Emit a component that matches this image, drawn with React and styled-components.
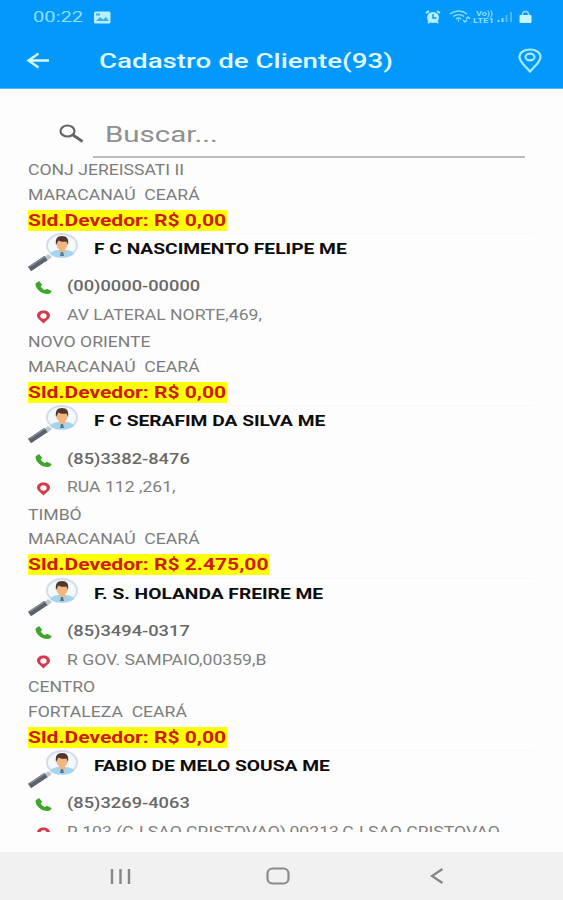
import React from 'react';
import styled, { createGlobalStyle } from 'styled-components';

const GlobalStyle = createGlobalStyle`
  * {
    box-sizing: border-box;
  }
  body {
    margin: 0;
    background: #fdfdfd;
    font-family: Roboto, "Liberation Sans", sans-serif;
  }
`;

const Screen = styled.div`
  display: flex;
  flex-direction: column;
  width: 563px;
  height: 900px;
  overflow: hidden;
  background: #fdfdfd;
`;

const Header = styled.header`
  height: 89px;
  flex: none;
  background: #0398fb;
  border-bottom: 1px solid #55b9f5;
`;

const StatusBar = styled.div`
  display: flex;
  align-items: center;
  height: 34px;
  padding: 0 31px 0 33px;
`;

const StatusIcons = styled.div`
  display: flex;
  align-items: center;
  margin-left: auto;
`;

const TitleBar = styled.div`
  display: flex;
  align-items: center;
  height: 54px;
  padding: 0 20px 0 26px;
`;

/* wide lettering: the glyphs are stretched from their left edge */
const Text = styled.span`
  display: inline-block;
  white-space: pre;
  transform-origin: left center;
  transform: scaleX(${(props) => props.$stretch || 1.257});
`;

const Clock = styled(Text)`
  width: 61px;
  font-size: 15.5px;
  color: #8fe0fb;
`;

const Title = styled(Text)`
  margin-left: 49px;
  margin-right: auto;
  font-size: 21px;
  font-weight: 500;
  color: #e2fbff;
`;

const SearchBar = styled.div`
  display: flex;
  flex: none;
  height: 69px;
  padding: 20px 38px 0 59px;
`;

const SearchIcon = styled.svg`
  flex: none;
  margin: 15px 9px 0 0;
`;

const SearchField = styled.div`
  flex: 1;
  height: 49px;
  padding: 12px 0 0 12px;
  border-bottom: 2px solid #bdbdbd;
`;

const Placeholder = styled(Text)`
  font-size: 22px;
  line-height: 27px;
  color: #8f8f8f;
`;

const List = styled.main`
  flex: none;
  height: 674px;
  overflow: hidden;
`;

const Client = styled.section`
  height: 172.4px;
  padding-left: 28px;
`;

const Place = styled.div`
  height: 24.5px;
  line-height: 24px;
  font-size: 14px;
  color: #7c7c7c;
`;

const BalanceRow = styled.div`
  display: flex;
  align-items: center;
  height: 26px;
`;

const Balance = styled.div`
  width: ${(props) => props.$width}px;
  height: 21px;
  line-height: 21px;
  background: #ffff0a;
  color: #cf1a10;
  font-size: 16px;
  font-weight: 700;
`;

const NameRow = styled.div`
  display: flex;
  height: 39px;
  margin-right: 30px;
`;

const Name = styled.div`
  flex: 1;
  margin-left: 15px;
  height: 30px;
  line-height: 30px;
  border-top: 1px solid #f8f8f8;
  font-size: 15px;
  font-weight: 700;
  color: #0c0c0c;
`;

const DetailRow = styled.div`
  display: flex;
  align-items: center;
  gap: 14px;
  height: 28.5px;
  padding-left: 6px;
  font-size: 14px;
  font-weight: ${(props) => (props.$strong ? 500 : 400)};
  color: ${(props) => (props.$strong ? '#686868' : '#808080')};

  svg {
    margin-top: 3px;
  }
`;

const NavBar = styled.nav`
  display: flex;
  align-items: center;
  justify-content: space-between;
  height: 48px;
  margin-top: auto;
  padding: 0 119px 0 109px;
  background: #f1f1f1;
`;

const HomeIcon = styled.svg`
  margin-right: 5px;
`;

const clients = [
  {
    district: 'CONJ JEREISSATI II',
    city: 'MARACANAÚ  CEARÁ',
    balance: '0,00',
    name: 'F C NASCIMENTO FELIPE ME',
    phone: '(00)0000-00000',
    address: 'AV LATERAL NORTE,469,',
  },
  {
    district: 'NOVO ORIENTE',
    city: 'MARACANAÚ  CEARÁ',
    balance: '0,00',
    name: 'F C SERAFIM DA SILVA ME',
    phone: '(85)3382-8476',
    address: 'RUA 112 ,261,',
  },
  {
    district: 'TIMBÓ',
    city: 'MARACANAÚ  CEARÁ',
    balance: '2.475,00',
    name: 'F. S. HOLANDA FREIRE ME',
    phone: '(85)3494-0317',
    address: 'R GOV. SAMPAIO,00359,B',
  },
  {
    district: 'CENTRO',
    city: 'FORTALEZA  CEARÁ',
    balance: '0,00',
    name: 'FABIO DE MELO SOUSA ME',
    phone: '(85)3269-4063',
    address: 'R 103 (CJ SAO CRISTOVAO),00213,CJ SAO CRISTOVAO',
  },
];

function PersonSearchIcon() {
  return (
    <svg width="51" height="39" viewBox="0 0 51 39">
      <path d="M20 21l4 3-5 4-3-3z" fill="#bcc4cc" />
      <path d="M1.500 36L18 25" stroke="#5c616e" strokeWidth="5.500" />
      <path d="M2 33.500L17 23.500" stroke="#8b909b" strokeWidth="1.200" />
      <ellipse cx="34" cy="12.500" rx="15" ry="11.500" fill="#f4f9fd" stroke="#d3dce8" strokeWidth="2" />
      <path d="M22 21c1-3 6-4 9-4h6c4 0 8 1 9 4-4 4-20 5-24 0z" fill="#a5d4ef" />
      <path d="M31 16h6v3l-3 3-3-3z" fill="#f0b884" />
      <path d="M33 19h2l1 4h-4z" fill="#477c9d" />
      <ellipse cx="34" cy="11.500" rx="5.500" ry="5.700" fill="#f2b780" />
      <path d="M28 12c-1-6 1-9 6-9s7 3 6 9l-1.500-3.500c-3 .5-6 .3-8-1z" fill="#52372c" />
    </svg>
  );
}

function PhoneIcon() {
  return (
    <svg width="19" height="15" viewBox="0 0 19 15">
      <path
        d="M1.500 3.500L5 1l3.200 3.700-1.500 1.800c1 1.700 2.300 2.800 4.300 3.500l2-1.200 4.500 2.200c.3 1.500-1.500 3-4 3C7.500 14 1.200 9 1.500 3.500z"
        fill="#3fa52d"
      />
    </svg>
  );
}

function PinIcon() {
  return (
    <svg width="19" height="15" viewBox="0 0 19 15">
      <path
        fillRule="evenodd"
        d="M9.500 1.500C5.700 1.500 3 3.600 3 6.500c0 3.300 4 5 6.500 8 2.500-3 6.500-4.700 6.500-8 0-2.900-2.700-5-6.500-5zm0 2.800c1.900 0 3.200 1 3.200 2.700s-1.300 2.700-3.200 2.700S6.300 8.700 6.300 7s1.300-2.700 3.200-2.700z"
        fill="#d43a4b"
      />
    </svg>
  );
}

function ClientItem({ client }) {
  return (
    <Client>
      <Place>
        <Text>{client.district}</Text>
      </Place>
      <Place>
        <Text>{client.city}</Text>
      </Place>
      <BalanceRow>
        <Balance $width={client.balance.length > 4 ? 241 : 199}>
          <Text $stretch={1.316}>Sld.Devedor: R$ {client.balance}</Text>
        </Balance>
      </BalanceRow>
      <NameRow>
        <PersonSearchIcon />
        <Name>
          <Text $stretch={1.28}>{client.name}</Text>
        </Name>
      </NameRow>
      <DetailRow $strong>
        <PhoneIcon />
        <Text $stretch={1.305}>{client.phone}</Text>
      </DetailRow>
      <DetailRow>
        <PinIcon />
        <Text>{client.address}</Text>
      </DetailRow>
    </Client>
  );
}

function App() {
  return (
    <Screen>
      <GlobalStyle />
      <Header>
        <StatusBar>
          <Clock $stretch={1.3}>00:22</Clock>
          <svg width="17" height="13" viewBox="0 0 17 13">
            <rect x="0" y="0.500" width="16.500" height="12" rx="1.500" fill="#b9f0fd" />
            <path d="M2 10l4-4 3 2.500L12 6l3 4z" fill="#3eaef0" />
            <rect x="2" y="2.500" width="4" height="2" fill="#3eaef0" />
          </svg>
          <StatusIcons>
            <svg width="94" height="16" viewBox="0 0 94 16" fill="none">
              <ellipse cx="8" cy="8.500" rx="6" ry="5.500" fill="#b5effd" />
              <path d="M1 4l3-2M15 4l-3-2M3 14l2-2M13 14l-2-2" stroke="#b5effd" strokeWidth="2" />
              <path d="M8 5v4h3.500" stroke="#0398fb" strokeWidth="1.400" />
              <path d="M25 5c5-4 12-4 17 0M28 7.500c3.500-2.500 8-2.500 11 0M31 10c2-1.400 3.500-1.400 5 0" stroke="#8ddffb" strokeWidth="1.500" />
              <path d="M33.500 10.500v2M38 11l2 2 2-2M41 10l2-2 2 2" stroke="#8ddffb" strokeWidth="1.300" />
              <g fill="#8ddffb" fontSize="7" fontWeight="700">
                <text x="51" y="7" textLength="17" lengthAdjust="spacingAndGlyphs">Vo))</text>
                <text x="48" y="14" textLength="21" lengthAdjust="spacingAndGlyphs">LTE1</text>
              </g>
              <path d="M73.500 13v-2M77.500 13V9" stroke="#8ddffb" strokeWidth="2" />
              <path d="M81.500 13V6M86 13V3" stroke="#4dbaf8" strokeWidth="2" />
            </svg>
            <svg width="13" height="16" viewBox="0 0 13 16" fill="none">
              <path d="M3.500 8V5c0-3.500 6-3.500 6 0v3" stroke="#8ddffb" strokeWidth="1.500" />
              <rect x="0.500" y="6" width="12" height="8" rx="1" fill="#c5f5ff" />
            </svg>
          </StatusIcons>
        </StatusBar>
        <TitleBar>
          <svg width="24" height="18" viewBox="0 0 24 18" fill="none" stroke="#d5f8ff" strokeWidth="2.400">
            <path d="M23 8.500H2.500M12.500 1.500L2.500 8.500l10 7" />
          </svg>
          <Title $stretch={1.32}>Cadastro de Cliente(93)</Title>
          <svg width="26" height="26" viewBox="0 0 26 26" fill="none" stroke="#a9ebfd" strokeWidth="2.200">
            <path d="M13 23.500C9 18.500 2.500 14 2.500 8.900 2.500 4.500 7 1.500 13 1.500s10.500 3 10.500 7.400C23.500 14 17 18.500 13 23.500z" />
            <ellipse cx="13" cy="9" rx="4.500" ry="3.300" />
          </svg>
        </TitleBar>
      </Header>
      <SearchBar>
        <SearchIcon width="25" height="19" viewBox="0 0 25 19" fill="none" stroke="#656565">
          <ellipse cx="8.500" cy="7" rx="7" ry="5.500" strokeWidth="2.200" />
          <path d="M14 11L23.500 17.500" strokeWidth="2.800" />
        </SearchIcon>
        <SearchField>
          <Placeholder $stretch={1.34}>Buscar...</Placeholder>
        </SearchField>
      </SearchBar>
      <List>
        {clients.map((client) => (
          <ClientItem key={client.name} client={client} />
        ))}
      </List>
      <NavBar>
        <svg width="22" height="17" viewBox="0 0 22 17" stroke="#868686" strokeWidth="2.400">
          <path d="M3 1v15M11.500 1v15M20 1v15" />
        </svg>
        <HomeIcon width="24" height="18" viewBox="0 0 24 18" fill="none" stroke="#8a8a8a" strokeWidth="2.200">
          <rect x="1.500" y="1.500" width="21" height="15" rx="5" />
        </HomeIcon>
        <svg width="14" height="16" viewBox="0 0 14 16" fill="none" stroke="#868686" strokeWidth="2.200">
          <path d="M12.500 1L2 8l10.500 7" />
        </svg>
      </NavBar>
    </Screen>
  );
}

export default App;
